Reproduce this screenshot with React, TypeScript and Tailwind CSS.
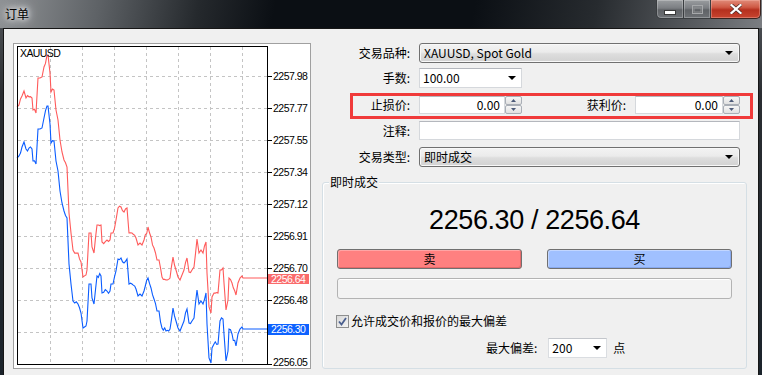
import React from "react";

// ask line (red) key points in page coords; bid line (blue) is the same shape 51px lower
const ASK: [number, number][] = [
  [17, 107], [19, 105], [22, 96], [24, 91], [26, 98], [32, 98], [33, 110], [36, 113], [38, 78], [40, 78],
  [42, 77], [44, 67], [47, 55], [48, 55], [50, 73], [51, 92], [54, 90], [56, 110], [58, 120], [60, 140],
  [62, 152], [64, 160], [67, 167], [68, 190], [69, 213], [71, 233], [73, 250], [78, 253], [81, 262], [83, 277],
  [86, 275], [87, 270], [89, 233], [91, 233], [92, 247], [94, 253], [97, 225], [101, 225], [102, 242], [107, 240],
  [110, 240], [111, 233], [113, 233], [116, 220], [118, 208], [121, 207], [124, 212], [127, 208], [129, 233], [132, 233],
  [136, 238], [138, 245], [140, 243], [142, 245], [144, 240], [148, 227], [151, 237], [154, 248], [157, 260], [159, 260],
  [162, 277], [166, 280], [170, 278], [173, 257], [176, 270], [178, 277], [180, 280], [182, 275], [184, 270], [187, 258],
  [189, 272], [192, 270], [194, 267], [197, 239], [199, 253], [201, 250], [203, 253], [206, 242], [207, 273], [209, 307],
  [211, 313], [212, 297], [214, 293], [218, 293], [220, 270], [223, 268], [224, 283], [226, 310], [228, 300], [229, 278],
  [232, 283], [236, 295], [238, 283], [240, 278], [242, 276], [243, 278], [268, 278],
];

function linePoints(offset: number) {
  const out: string[] = [];
  let k = 0;
  for (let i = 0; i < ASK.length - 1; i++) {
    const [x0, y0] = ASK[i];
    const [x1, y1] = ASK[i + 1];
    const steps = Math.max(1, Math.round((x1 - x0) / 1.5));
    for (let s = 0; s < steps; s++) {
      const t = s / steps;
      const x = x0 + (x1 - x0) * t;
      let y = y0 + (y1 - y0) * t;
      if (s > 0 && x < 242) {
        const n = Math.sin(++k * 78.233 + offset) * 43758.5453;
        y += (n - Math.floor(n) - 0.5) * 5;
      }
      out.push(`${x.toFixed(1)},${Math.min(363, y + offset).toFixed(1)}`);
    }
  }
  const [lx, ly] = ASK[ASK.length - 1];
  out.push(`${lx},${ly + offset}`);
  return out.join(" ");
}

const GRID_X = [50, 82, 114, 146, 178, 210, 242];
// 2256.27 sits under the bid label, so it has no text
const GRID_Y: [number, string][] = [
  [76, "2257.98"], [108, "2257.77"], [140, "2257.55"], [172, "2257.34"], [204, "2257.12"],
  [236, "2256.91"], [268, "2256.70"], [300, "2256.48"], [332, ""],
];

function Chart() {
  return (
    <svg width="296" height="324" viewBox="14 44 296 324" shapeRendering="crispEdges" className="block">
      {GRID_X.map((x) => (
        <line key={x} x1={x + 0.5} y1={47} x2={x + 0.5} y2={364} stroke="#c4c4c4" strokeDasharray="3 3" />
      ))}
      {GRID_Y.map(([y]) => (
        <line key={y} x1={18} y1={y + 0.5} x2={267} y2={y + 0.5} stroke="#c4c4c4" strokeDasharray="3 3" />
      ))}
      {[...GRID_Y.map(([y]) => y), 364].map((y) => (
        <line key={"t" + y} x1={268} y1={y + 0.5} x2={272} y2={y + 0.5} stroke="#000" />
      ))}
      <polyline points={linePoints(0)} fill="none" stroke="#ff5a5a" strokeWidth="1.1" shapeRendering="auto" />
      <polyline points={linePoints(51)} fill="none" stroke="#0a5cff" strokeWidth="1.1" shapeRendering="auto" />
      <rect x={17.5} y={46.5} width={250} height={317.5} fill="none" stroke="#000" />
      <g fontFamily="'Liberation Sans', Arial, sans-serif" fontSize="10.5" letterSpacing="-0.5" shapeRendering="auto">
        <text x={20} y={57} fill="#000" letterSpacing="-0.6">XAUUSD</text>
        {GRID_Y.filter(([, label]) => label).map(([y, label]) => (
          <text key={label} x={273} y={y + 3.5} fill="#000">{label}</text>
        ))}
        <text x={273} y={366} fill="#000">2256.05</text>
        <rect x={268} y={274} width={41} height={10} fill="#fa6b6b" shapeRendering="crispEdges" />
        <text x={271} y={282.5} fill="#fff">2256.64</text>
        <rect x={268} y={323.5} width={41} height={11.5} fill="#0d62ff" shapeRendering="crispEdges" />
        <text x={271} y={333} fill="#fff">2256.30</text>
      </g>
    </svg>
  );
}

function Arrow() {
  return (
    <svg width="8" height="4" viewBox="0 0 8 4" className="shrink-0">
      <polygon points="0,0 8,0 4,4" fill="#000" />
    </svg>
  );
}

function Combo({ text }: { text: string }) {
  return (
    <div className="flex-1 flex items-center h-[20px] rounded-[3px] border border-[#707070] bg-[linear-gradient(180deg,#f3f3f3_0%,#ebebeb_45%,#dddddd_55%,#d2d2d2_100%)] shadow-[inset_0_0_0_1px_#f8f8f8] pl-[4px] pr-[6px]">
      <span className="flex-1 leading-[14px]">{text}</span>
      <Arrow />
    </div>
  );
}

function Spin({ className }: { className: string }) {
  return (
    <div className={`flex h-[18px] ${className}`}>
      <div className="flex-1 bg-white border border-[#d5d8dc] border-t-[#b4b7bd] text-right pr-[4px] leading-[16px]">0.00</div>
      <div className="w-[17px] flex flex-col">
        <div className="flex-1 flex items-center justify-center rounded-[2px] border border-[#a9aeb6] bg-[linear-gradient(180deg,#f6f6f6,#e1e1e1)]">
          <svg width="5" height="3" viewBox="0 0 5 3"><polygon points="2.5,0 5,3 0,3" fill="#4c5a78" /></svg>
        </div>
        <div className="flex-1 flex items-center justify-center rounded-[2px] border border-[#a9aeb6] bg-[linear-gradient(180deg,#f6f6f6,#e1e1e1)]">
          <svg width="5" height="3" viewBox="0 0 5 3"><polygon points="0,0 5,0 2.5,3" fill="#4c5a78" /></svg>
        </div>
      </div>
    </div>
  );
}

export default function App() {
  const label = "w-[88px] shrink-0 text-right leading-[14px] mr-[9px]";

  return (
    <div className="w-[762px] h-[375px] overflow-hidden flex flex-col bg-[linear-gradient(180deg,#55595d,#2a2d31_25%,#1b232b_100%)] font-['Noto_Sans_CJK_SC','Liberation_Sans',sans-serif] text-[12px] text-black">

      {/* TITLE BAR */}
      <div className="h-[28px] shrink-0 flex bg-[linear-gradient(100deg,#8f9295_0%,#5e6266_13%,#25292d_26%,#0b0f14_36%,#0b0f14_62%,#272b2f_78%,#5b5e62_92%,#7b7e82_100%)]">
        <span className="ml-[5px] mt-[5px] leading-[18px] [text-shadow:0_0_5px_#fff,0_0_10px_#fff,0_0_14px_rgba(255,255,255,0.7)]">订单</span>

        <div className="ml-auto mr-[1px] flex h-[19px]">
          <div className="w-[28px] h-full flex items-center justify-center rounded-bl-[5px] border border-t-0 border-[#3a3d40] bg-[linear-gradient(180deg,#9a9da0_0%,#7b7e82_45%,#5f6266_55%,#6e7175_100%)] shadow-[inset_0_0_0_1px_rgba(255,255,255,0.25)]">
            <svg width="12" height="5" viewBox="0 0 12 5" className="mt-[6px]">
              <rect x="0.5" y="0.5" width="11" height="4" fill="#fff" stroke="#3a3a3a" />
            </svg>
          </div>
          <div className="w-[27px] h-full flex items-center justify-center border-b border-r border-[#3a3d40] bg-[linear-gradient(180deg,#9a9da0_0%,#7b7e82_45%,#5f6266_55%,#6e7175_100%)] shadow-[inset_0_0_0_1px_rgba(255,255,255,0.25)]">
            <svg width="11" height="9" viewBox="0 0 11 9">
              <rect x="0.5" y="0.5" width="10" height="8" fill="none" stroke="#a6a8aa" />
              <rect x="2" y="3" width="7" height="4" fill="none" stroke="#8d8f91" />
            </svg>
          </div>
          <div className="w-[50px] h-full flex items-center justify-center rounded-br-[5px] border border-t-0 border-l-0 border-[#3a2420] bg-[linear-gradient(180deg,#e08b79_0%,#cf5a45_40%,#b5301e_55%,#c8442f_100%)] shadow-[inset_0_0_0_1px_rgba(255,200,190,0.35)]">
            <svg width="12" height="10" viewBox="0 0 12 10">
              <path d="M1.5 1 L10.5 9 M10.5 1 L1.5 9" stroke="#4a2a25" strokeWidth="3.6" strokeLinecap="square" />
              <path d="M1.5 1 L10.5 9 M10.5 1 L1.5 9" stroke="#fff" strokeWidth="2.2" strokeLinecap="square" />
            </svg>
          </div>
        </div>
      </div>

      {/* CLIENT */}
      <div className="flex-1 mx-[3px] border-x border-t border-[#161616] bg-[#f0f0f0] flex items-start pl-[9px] pt-[14px]">

        {/* CHART */}
        <div className="w-[298px] h-[326px] shrink-0 border border-[#a0a0a0] bg-white">
          <Chart />
        </div>

        {/* FORM */}
        <div className="ml-[11px] w-[425px] flex flex-col">

          <div className="flex items-center pr-[7px]">
            <span className={label}>交易品种:</span>
            <Combo text="XAUUSD, Spot Gold" />
          </div>

          <div className="mt-[5px] flex items-center pr-[7px]">
            <span className={label}>手数:</span>
            <div className="w-[103px] h-[20px] flex items-center bg-white border border-[#d5d8dc] border-t-[#b4b7bd] pl-[3px] pr-[5px]">
              <span className="flex-1 leading-[14px]">100.00</span>
              <Arrow />
            </div>
          </div>

          <div className="relative mt-[8px] flex items-center pr-[7px]">
            <span className={label}>止损价:</span>
            <Spin className="w-[103px]" />
            <span className="flex-1 text-right leading-[14px] mr-[9px]">获利价:</span>
            <Spin className="w-[105px]" />
            <div className="absolute left-[28px] top-[-3px] w-[403px] h-[26px] border-[3px] border-[#f03a3a]" />
          </div>

          <div className="mt-[7px] flex items-center pr-[7px]">
            <span className={label}>注释:</span>
            <div className="flex-1 h-[19px] bg-white border border-[#d5d8dc] border-t-[#b4b7bd]" />
          </div>

          <div className="mt-[7px] flex items-center pr-[7px]">
            <span className={label}>交易类型:</span>
            <Combo text="即时成交" />
          </div>

          {/* GROUP: 即时成交 */}
          <div className="relative mt-[15px] h-[187px] rounded-[3px] border border-[#d5dfe5] shadow-[inset_1px_1px_0_#fff] px-[14px] flex flex-col">
            <span className="absolute left-[6px] top-[-8px] px-[1px] bg-[#f0f0f0] leading-[14px]">即时成交</span>

            <div className="mt-[22px] text-center leading-[30px] text-[27px] tracking-[-0.4px] font-['Liberation_Sans',sans-serif]">
              2256.30 / 2256.64
            </div>

            <div className="mt-[14px] flex justify-between">
              <button className="w-[185px] h-[20px] flex items-center justify-center rounded-[3px] border border-[#707070] bg-[#ff8080] shadow-[inset_1px_1px_0_#ffa5a5,inset_-1px_-1px_0_#e56a6a] leading-[14px]">
                卖
              </button>
              <button className="w-[185px] h-[20px] flex items-center justify-center rounded-[3px] border border-[#707070] bg-[#a0c0ff] shadow-[inset_1px_1px_0_#c2d6ff,inset_-1px_-1px_0_#87a8ee] leading-[14px]">
                买
              </button>
            </div>

            <div className="mt-[9px] h-[21px] rounded-[3px] border border-[#b3b3b3] bg-[#f3f3f3] shadow-[inset_0_1px_0_#fff]" />

            <div className="mt-[14px] h-[16px] flex items-center ml-[-1px]">
              <div className="w-[13px] h-[13px] border border-[#8e8f8f] bg-[linear-gradient(135deg,#d8d8d8,#f4f4f4)] flex items-center justify-center">
                <svg width="9" height="9" viewBox="0 0 9 9">
                  <path d="M1 4.5 L3.5 7.5 L8 1" fill="none" stroke="#4a5f8e" strokeWidth="1.8" />
                </svg>
              </div>
              <span className="ml-[2px] leading-[14px]">允许成交价和报价的最大偏差</span>
            </div>

            <div className="mt-[9px] flex items-center pl-[149px]">
              <span className="leading-[14px]">最大偏差:</span>
              <div className="ml-[11px] w-[59px] h-[20px] flex items-center bg-white border border-[#dadde1] border-t-[#c3c6cb] pl-[3px] pr-[5px]">
                <span className="flex-1 leading-[14px]">200</span>
                <Arrow />
              </div>
              <span className="ml-[6px] leading-[14px]">点</span>
            </div>
          </div>

        </div>
      </div>
    </div>
  );
}
